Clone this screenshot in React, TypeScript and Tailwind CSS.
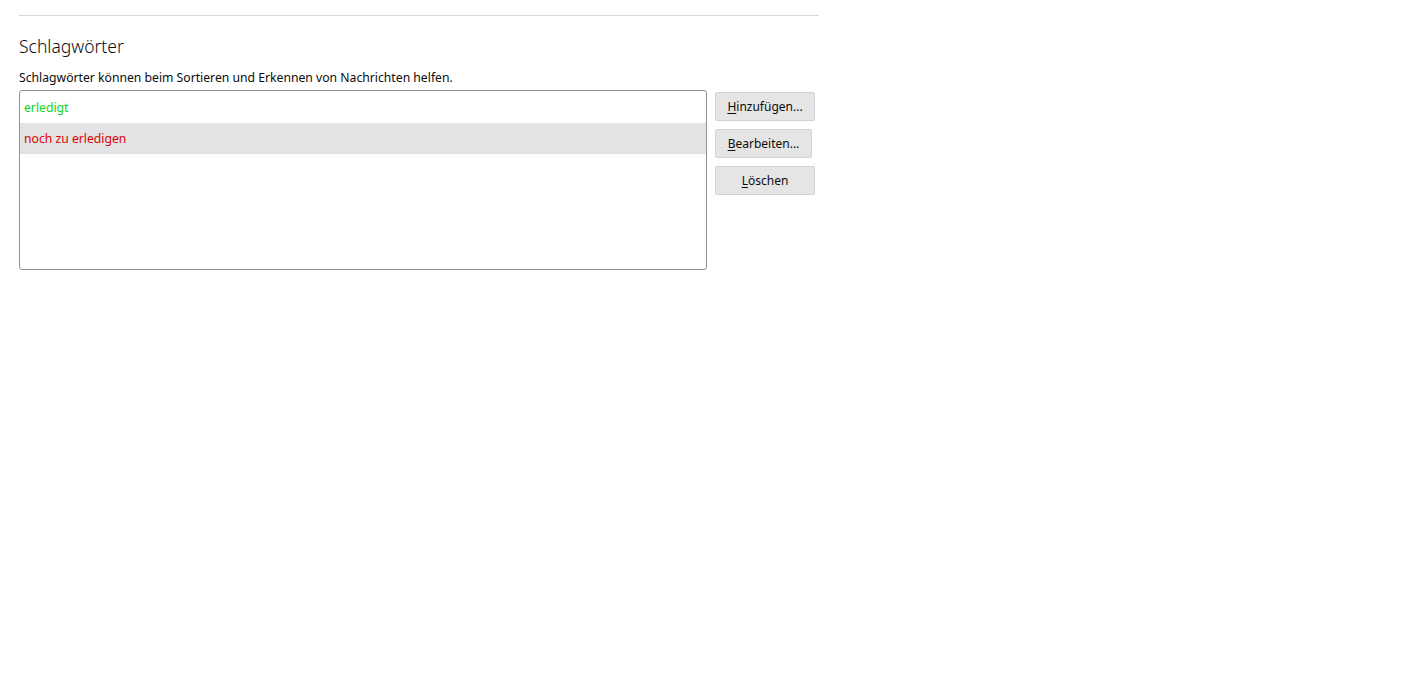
import React from "react";

export default function App() {
  const font = { fontFamily: '"Segoe UI", "Noto Sans", "Open Sans", sans-serif' };
  return (
    <div className="min-h-[677px] w-[1420px] bg-white text-[#0c0c0d]" style={font}>
      <div className="w-[800px] ml-[19px] pt-[15px]">
        <div className="h-px bg-[#d7d7db]" />
        <h2 className="mt-[18px] text-[17.5px] font-light leading-[24px] text-[#0c0c0d]">Schlagwörter</h2>
        <p className="mt-[11px] text-[12.2px] leading-[18px]">
          Schlagwörter können beim Sortieren und Erkennen von Nachrichten helfen.
        </p>
        <div className="flex mt-[3px]">
          <div className="w-[688px] h-[180px] border border-[#919191] rounded-[3px]">
            <div className="h-[32px] flex items-center px-[4px] pt-[2px] text-[12.2px] text-[#12d612]">erledigt</div>
            <div className="h-[31px] flex items-center px-[4px] pt-[2px] text-[12.2px] text-[#e00000] bg-[#e3e3e6]">noch zu erledigen</div>
          </div>
          <div className="flex flex-col items-start ml-[8px] pt-[2px] gap-[8px]">
            <button className="w-[100px] h-[29px] bg-[#e5e5e6] border border-[#d2d2d5] rounded-[2px] text-[12px] leading-none">
              <span className="underline underline-offset-2">H</span>inzufügen...
            </button>
            <button className="w-[97px] h-[29px] bg-[#e5e5e6] border border-[#d2d2d5] rounded-[2px] text-[12px] leading-none">
              <span className="underline underline-offset-2">B</span>earbeiten...
            </button>
            <button className="w-[100px] h-[29px] bg-[#e5e5e6] border border-[#d2d2d5] rounded-[2px] text-[12px] leading-none">
              <span className="underline underline-offset-2">L</span>öschen
            </button>
          </div>
        </div>
      </div>
    </div>
  );
}
